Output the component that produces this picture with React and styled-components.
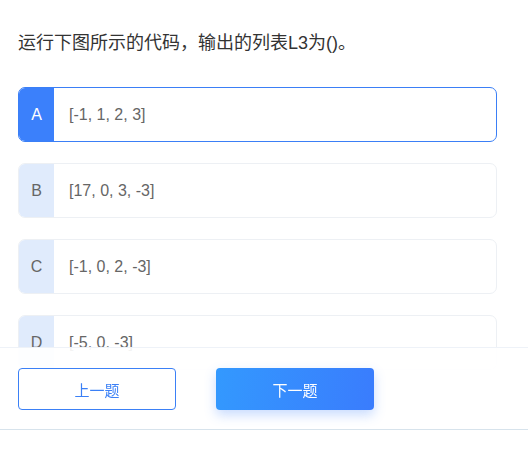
import React from "react";
import styled, { createGlobalStyle } from "styled-components";

const Global = createGlobalStyle`
  html, body { margin: 0; padding: 0; background: #fff; }
  body { font-family: "Liberation Sans", Arial, "Noto Sans CJK SC", sans-serif; }
`;

const Page = styled.div`
  padding: 31px 31px 0 18px;
  height: 459px;
  box-sizing: border-box;
  overflow: hidden;
`;

const Question = styled.div`
  font-size: 18px;
  line-height: 24px;
  color: #333;
  margin-bottom: 32px;
`;

const Options = styled.div`
  display: flex;
  flex-direction: column;
  gap: 21px;
`;

const Option = styled.div`
  display: flex;
  height: 55px;
  box-sizing: border-box;
  border: 1px solid ${(p) => (p.$active ? "#3b7ff6" : "#edf0f4")};
  border-radius: 7px;
  overflow: hidden;
  background: #fff;
`;

const Label = styled.div`
  width: 35px;
  flex: none;
  display: flex;
  align-items: center;
  justify-content: center;
  font-size: 16px;
  color: ${(p) => (p.$active ? "#fff" : "#666")};
  background: ${(p) => (p.$active ? "#3b80fb" : "#e0ebfc")};
`;

const Text = styled.div`
  display: flex;
  align-items: center;
  padding-left: 15px;
  font-size: 16px;
  color: #666;
`;

const Footer = styled.div`
  position: fixed;
  left: 0;
  right: 0;
  top: 347px;
  height: 83px;
  box-sizing: border-box;
  background: rgba(255, 255, 255, 0.92);
  border-top: 1px solid #eef2f8;
  border-bottom: 1px solid #d7e3ec;
  display: flex;
  align-items: flex-start;
  padding: 20px 0 0 18px;
  gap: 40px;
`;

const Button = styled.button`
  width: 158px;
  height: 42px;
  border-radius: 4px;
  font-family: inherit;
  font-size: 15px;
  cursor: pointer;
  border: ${(p) => (p.$primary ? "none" : "1px solid #3b80f6")};
  color: ${(p) => (p.$primary ? "#fff" : "#3b80f6")};
  background: ${(p) =>
    p.$primary ? "linear-gradient(100deg, #3399fe 0%, #3a7cfd 100%)" : "#fff"};
  box-shadow: ${(p) => (p.$primary ? "0 5px 12px rgba(58, 124, 253, 0.28)" : "none")};
`;

const options = [
  { k: "A", t: "[-1, 1, 2, 3]", active: true },
  { k: "B", t: "[17, 0, 3, -3]" },
  { k: "C", t: "[-1, 0, 2, -3]" },
  { k: "D", t: "[-5, 0, -3]" },
];

export default function App() {
  return (
    <>
      <Global />
      <Page>
        <Question>运行下图所示的代码，输出的列表L3为()。</Question>
        <Options>
          {options.map((o) => (
            <Option key={o.k} $active={o.active}>
              <Label $active={o.active}>{o.k}</Label>
              <Text>{o.t}</Text>
            </Option>
          ))}
        </Options>
      </Page>
      <Footer>
        <Button>上一题</Button>
        <Button $primary>下一题</Button>
      </Footer>
    </>
  );
}
